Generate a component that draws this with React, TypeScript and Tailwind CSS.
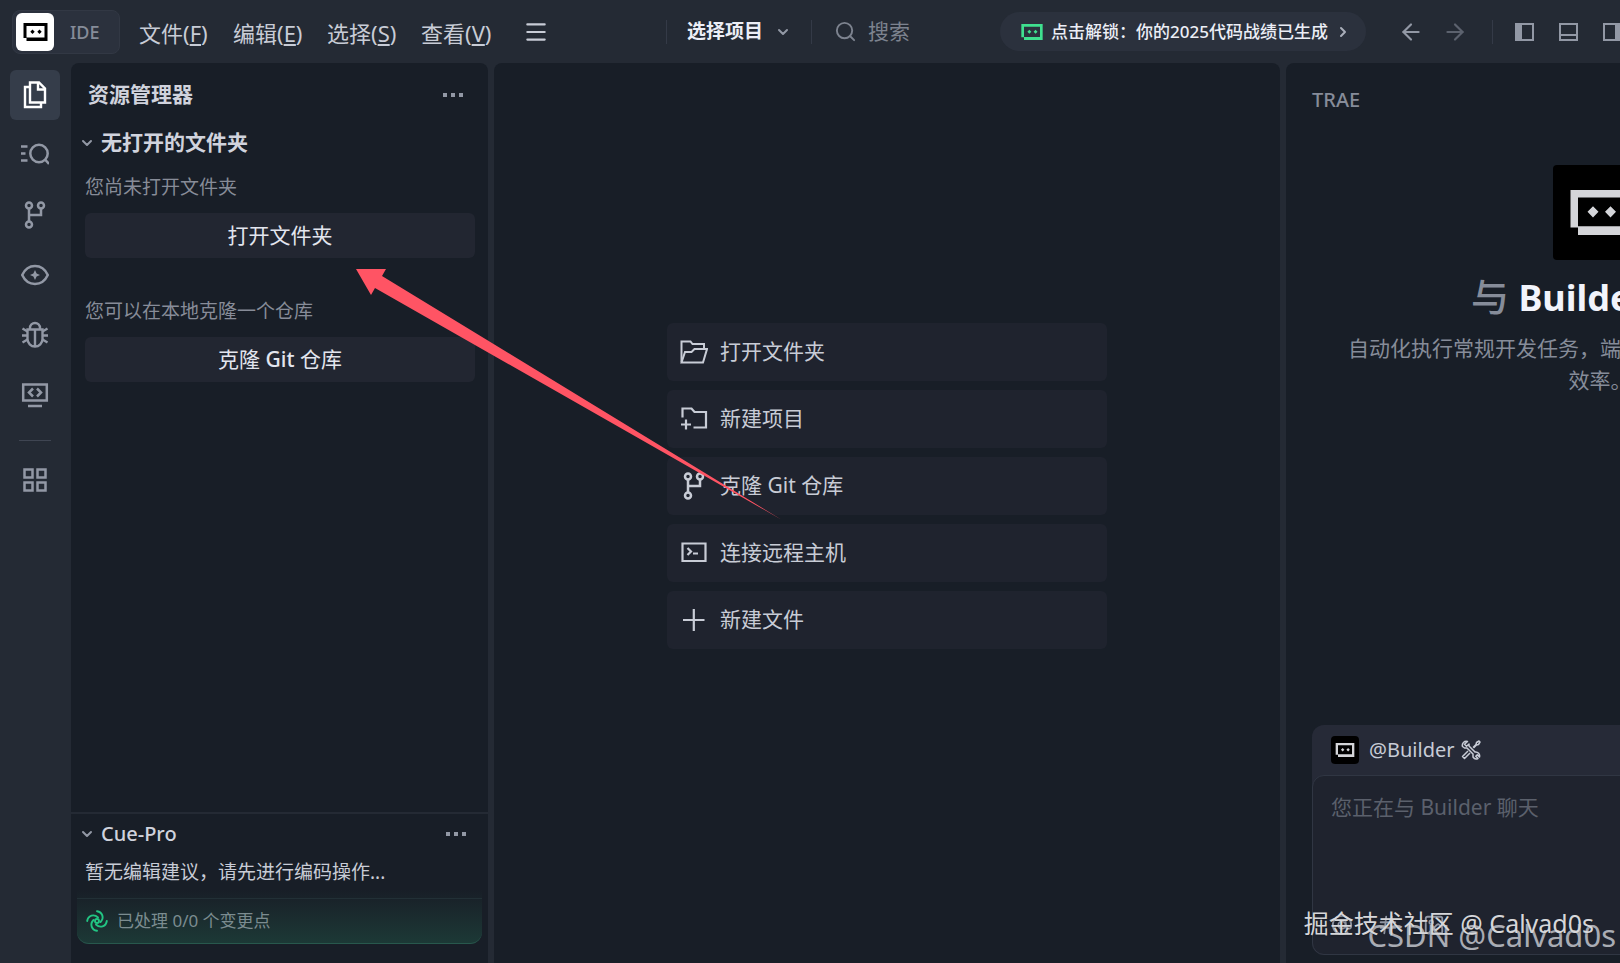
import React from 'react';
import { ArrowLeft, ArrowRight, AtSign, ChevronDown, ChevronRight, Hash, Image, Menu, Search } from 'lucide-react';

interface IconProps {
  className?: string;
}

const BotIcon: React.FC<IconProps> = ({ className }) => (
  <svg viewBox="0 0 24 18" className={className} fill="currentColor" aria-hidden="true">
    <path fillRule="evenodd" d="M0 0H24V18H3V15H0ZM3 3V14.5H21V3Z" />
    <path d="M9 6.5l2.2 2.2L9 11l-2.2-2.3ZM16 6.5l2.2 2.2L16 11l-2.2-2.3Z" />
  </svg>
);

const FilesIcon: React.FC<IconProps> = ({ className }) => (
  <svg viewBox="0 0 28 28" className={className} fill="none" stroke="currentColor" strokeWidth="2.4" aria-hidden="true">
    <path d="M9 1.5h9l6 6V21.5H9Z" />
    <path d="M17 2v6.5h6.5M8.5 6H4V26H20V22" />
  </svg>
);

const SearchListIcon: React.FC<IconProps> = ({ className }) => (
  <svg viewBox="0 0 28 28" className={className} fill="none" stroke="currentColor" strokeWidth="2.5" aria-hidden="true">
    <circle cx="18" cy="12.5" r="8.7" />
    <path d="M24 18.5l4 4.5M0 5.5h6.5M0 12.5h4.5M0 19.5h6.5" />
  </svg>
);

const BranchIcon: React.FC<IconProps> = ({ className }) => (
  <svg viewBox="0 0 28 28" className={className} fill="none" stroke="currentColor" strokeWidth="2.5" aria-hidden="true">
    <circle cx="8" cy="4.5" r="3" />
    <circle cx="20" cy="4.5" r="3" />
    <circle cx="8" cy="23.5" r="3" />
    <path d="M8 7.5v13M20 7.5V14H8" />
  </svg>
);

const EyeIcon: React.FC<IconProps> = ({ className }) => (
  <svg viewBox="0 0 28 28" className={className} fill="none" stroke="currentColor" strokeWidth="2.5" aria-hidden="true">
    <path d="M1.2 14C4 8 8.5 5 14 5s10 3 12.8 9C24 20 19.5 23 14 23S4 20 1.2 14Z" />
    <path d="M14 9l1.6 3.4 3.4 1.6-3.4 1.6L14 19l-1.6-3.4L9 14l3.4-1.6Z" fill="currentColor" stroke="none" />
  </svg>
);

const BugIcon: React.FC<IconProps> = ({ className }) => (
  <svg viewBox="0 0 28 28" className={className} fill="none" stroke="currentColor" strokeWidth="2.4" aria-hidden="true">
    <path d="M6.5 8.5h15V18a7.5 7.5 0 0 1-15 0ZM9 8.5V7a5 5 0 0 1 10 0v1.5M14 8.5v17" />
    <path d="M6.5 10.5L1.5 7.5M6.5 14.5H1M6.5 18.5l-5 3M21.5 10.5l5-3M21.5 14.5H27M21.5 18.5l5 3" />
  </svg>
);

const RemoteIcon: React.FC<IconProps> = ({ className }) => (
  <svg viewBox="0 0 28 28" className={className} fill="none" stroke="currentColor" strokeWidth="2.5" aria-hidden="true">
    <path d="M2.2 3.5h23.6v16H2.200ZM7 25h14" />
    <path d="M12 7.5l-4 4 4 4M16 7.5l4 4-4 4" />
  </svg>
);

const GridIcon: React.FC<IconProps> = ({ className }) => (
  <svg viewBox="0 0 28 28" className={className} fill="none" stroke="currentColor" strokeWidth="2.5" aria-hidden="true">
    <path d="M3.5 3.5h8v8h-8ZM16.5 3.5h8v8h-8ZM3.5 16.5h8v8h-8ZM16.5 16.5h8v8h-8Z" />
  </svg>
);

const FolderOpenIcon: React.FC<IconProps> = ({ className }) => (
  <svg viewBox="0 0 28 28" className={className} fill="none" stroke="currentColor" strokeWidth="2" aria-hidden="true">
    <path d="M1.5 24V3.5h9l2 2.5H24v5" />
    <path d="M1.5 24.5L5 14h6.5l3-3H27L23 24.5Z" />
  </svg>
);

const FolderAddIcon: React.FC<IconProps> = ({ className }) => (
  <svg viewBox="0 0 28 28" className={className} fill="none" stroke="currentColor" strokeWidth="2.2" aria-hidden="true">
    <path d="M2.5 12.5V3.5h9L14.5 7H26v15.5H13.5" />
    <path d="M1 19.5h10M6 14.5v10" />
  </svg>
);

const TerminalIcon: React.FC<IconProps> = ({ className }) => (
  <svg viewBox="0 0 28 28" className={className} fill="none" stroke="currentColor" strokeWidth="2.2" aria-hidden="true">
    <path d="M2.5 4.5h23v17.5h-23Z" />
    <path d="M7.5 9l3.5 3.5L7.5 16M13 14.5h5" />
  </svg>
);

const PlusIcon: React.FC<IconProps> = ({ className }) => (
  <svg viewBox="0 0 28 28" className={className} fill="none" stroke="currentColor" strokeWidth="2.2" aria-hidden="true">
    <path d="M3 14h21.5M13.8 3v22" />
  </svg>
);

const DotsIcon: React.FC<IconProps> = ({ className }) => (
  <svg viewBox="0 0 20 4" className={className} fill="currentColor" aria-hidden="true">
    <path d="M0 0h4v4H0ZM8 0h4v4H8ZM16 0h4v4h-4Z" />
  </svg>
);

const SwirlIcon: React.FC<IconProps> = ({ className }) => (
  <svg viewBox="0 0 22 22" className={className} fill="none" stroke="currentColor" strokeWidth="1.9" strokeLinecap="round" aria-hidden="true">
    <circle cx="11" cy="11" r="2" />
    <path d="M11 1.2C16.5 2 18.5 8 14.5 12" />
    <path d="M20.8 11C20 16.5 14 18.5 10 14.5" />
    <path d="M11 20.8C5.5 20 3.5 14 7.5 10" />
    <path d="M1.2 11C2 5.5 8 3.5 12 7.5" />
  </svg>
);

const ToolsIcon: React.FC<IconProps> = ({ className }) => (
  <svg viewBox="0 0 20 20" className={className} fill="none" stroke="currentColor" strokeWidth="1.5" strokeLinejoin="round" aria-hidden="true">
    <path d="M6.5 1.5A4 4 0 0 0 1.5 6.5L3.5 8H6l6 6v3a4 4 0 0 0 5 1.5L14.8 16.3l1.5-1.5 2.2 2.2A4 4 0 0 0 14 12L8 6V4L5.5 6.2 3.5 4.2Z" />
    <path d="M12 7.5l3-3 .5-2L18 1l1 1-1.5 2.5-2 .5-3 3M7 11l-5.5 5.5 2 2L9 13" />
  </svg>
);

const menus = [
  { label: '文件', hotkey: 'F' },
  { label: '编辑', hotkey: 'E' },
  { label: '选择', hotkey: 'S' },
  { label: '查看', hotkey: 'V' },
];

const activities = [
  { name: '搜索', Icon: SearchListIcon },
  { name: '源代码管理', Icon: BranchIcon },
  { name: '预览', Icon: EyeIcon },
  { name: '调试', Icon: BugIcon },
  { name: '远程', Icon: RemoteIcon },
];

const actions = [
  { label: '打开文件夹', Icon: FolderOpenIcon },
  { label: '新建项目', Icon: FolderAddIcon },
  { label: '克隆 Git 仓库', Icon: BranchIcon },
  { label: '连接远程主机', Icon: TerminalIcon },
  { label: '新建文件', Icon: PlusIcon },
];

const TopBar: React.FC = () => (
  <header className="flex h-[63px] shrink-0 items-center overflow-hidden pl-3">
    <div className="flex h-11 w-[108px] shrink-0 items-center rounded-lg border border-[#323844] bg-[#2b313d] pl-[3px]">
      <span className="flex h-[38px] w-[38px] items-center justify-center rounded-md bg-white text-black">
        <BotIcon className="h-[18px] w-[25px]" />
      </span>
      <span className="ml-4 text-lg font-medium text-[#868c99]">IDE</span>
    </div>

    <nav className="ml-[19px] flex shrink-0 items-center gap-6 pt-1 text-[22px] text-[#c8ccd6]">
      {menus.map((menu) => (
        <button key={menu.hotkey} type="button" className="w-[70px] text-left whitespace-nowrap">
          {menu.label}(<span className="underline underline-offset-2">{menu.hotkey}</span>)
        </button>
      ))}
    </nav>
    <button type="button" aria-label="菜单" className="ml-8 shrink-0 text-[#c8ccd6]">
      <Menu className="h-[26px] w-[26px]" strokeWidth={2} />
    </button>

    <div className="ml-auto flex shrink-0 items-center">
      <span className="h-6 w-px bg-[#343a47]" />
      <button type="button" className="ml-5 flex items-center text-[19px] font-bold text-[#eceef6]">
        选择项目
        <ChevronDown className="ml-3 h-4 w-4 text-[#9298a5]" strokeWidth={3} />
      </button>
      <span className="ml-5 h-6 w-px bg-[#343a47]" />
      <button type="button" className="ml-[22px] flex w-[162px] items-center gap-[11px] text-[21px] text-[#7d838f]">
        <Search className="h-[23px] w-[23px]" strokeWidth={2} />
        搜索
      </button>
      <button type="button" className="ml-1 flex h-[39px] w-[366px] items-center rounded-full bg-[#2b313d] pl-[21px] text-[#eceef6]">
        <BotIcon className="mr-2 h-4 w-[22px] text-[#3fe08f]" />
        <span className="w-[280px] text-left text-[17px] font-medium whitespace-nowrap">点击解锁：你的2025代码战绩已生成</span>
        <ChevronRight className="ml-1 h-4 w-4 text-[#a9aeba]" strokeWidth={3} />
      </button>
    </div>

    <div className="flex w-[254px] shrink-0 items-center overflow-hidden pl-8 text-[#9298a5]">
      <button type="button" aria-label="后退">
        <ArrowLeft className="h-[26px] w-[26px]" strokeWidth={2} />
      </button>
      <button type="button" aria-label="前进" className="ml-[18px] text-[#5c626e]">
        <ArrowRight className="h-[26px] w-[26px]" strokeWidth={2} />
      </button>
      <span className="ml-6 h-6 w-px shrink-0 bg-[#343a47]" />
      <button type="button" aria-label="左侧面板" className="ml-[22px] shrink-0">
        <svg viewBox="0 0 19 18" className="h-[18px] w-[19px]" fill="none" stroke="currentColor" strokeWidth="2">
          <path d="M1 1h17v16H1Z" />
          <path d="M1 1h5v16H1Z" fill="currentColor" />
        </svg>
      </button>
      <button type="button" aria-label="底部面板" className="ml-[25px] shrink-0">
        <svg viewBox="0 0 19 18" className="h-[18px] w-[19px]" fill="none" stroke="currentColor" strokeWidth="2">
          <path d="M1 1h17v16H1ZM1 12h17" />
        </svg>
      </button>
      <button type="button" aria-label="右侧面板" className="ml-[25px] shrink-0">
        <svg viewBox="0 0 19 18" className="h-[18px] w-[19px]" fill="none" stroke="currentColor" strokeWidth="2">
          <path d="M1 1h17v16H1Z" />
          <path d="M13 1h5v16h-5Z" fill="currentColor" />
        </svg>
      </button>
    </div>
  </header>
);

const ActivityBar: React.FC = () => (
  <nav className="flex w-[71px] shrink-0 flex-col items-center pt-[7px] pr-[2px] text-[#9298a5]">
    <button type="button" aria-label="资源管理器" className="flex h-[50px] w-[50px] items-center justify-center rounded-md bg-[#353d4a] text-white">
      <FilesIcon className="h-7 w-7" />
    </button>
    <div className="mt-[5px] flex flex-col">
      {activities.map(({ name, Icon }) => (
        <button key={name} type="button" aria-label={name} className="flex h-[60px] w-[50px] items-center justify-center">
          <Icon className="h-7 w-7" />
        </button>
      ))}
    </div>
    <span className="mt-[15px] h-px w-8 bg-[#3f4552]" />
    <button type="button" aria-label="扩展" className="mt-[25px]">
      <GridIcon className="h-7 w-7" />
    </button>
  </nav>
);

const Explorer: React.FC = () => (
  <aside className="flex w-[417px] shrink-0 flex-col rounded-t-lg bg-[#181e27]">
    <div className="flex h-16 items-center justify-between pr-[25px] pl-[17px]">
      <h2 className="text-[21px] font-bold text-[#d0d3dd]">资源管理器</h2>
      <button type="button" aria-label="更多">
        <DotsIcon className="h-1 w-5 text-[#9298a5]" />
      </button>
    </div>
    <button type="button" className="flex h-8 items-center gap-[6px] pl-2 text-[21px] font-bold text-[#d0d3dd]">
      <ChevronDown className="h-4 w-4 text-[#9298a5]" strokeWidth={3} />
      无打开的文件夹
    </button>
    <div className="pr-[13px] pl-[14px] text-[19px] text-[#878c98]">
      <p className="mt-3 leading-8">您尚未打开文件夹</p>
      <button type="button" className="mt-[10px] h-[45px] w-full rounded-md bg-[#222631] text-[21px] text-[#e2e5ee]">
        打开文件夹
      </button>
      <p className="mt-[37px] leading-8">您可以在本地克隆一个仓库</p>
      <button type="button" className="mt-[10px] h-[45px] w-full rounded-md bg-[#222631] text-[21px] text-[#e2e5ee]">
        克隆 <span className="font-medium">Git</span> 仓库
      </button>
    </div>

    <section className="mt-auto border-t-2 border-[#242a34] pb-[19px]">
      <div className="flex h-10 items-center justify-between pr-[22px] pl-2">
        <button type="button" className="flex items-center gap-[6px] text-[20px] font-medium text-[#d0d3dd]">
          <ChevronDown className="h-4 w-4 text-[#9298a5]" strokeWidth={3} />
          Cue-Pro
        </button>
        <button type="button" aria-label="更多">
          <DotsIcon className="h-1 w-5 text-[#9298a5]" />
        </button>
      </div>
      <p className="px-[14px] text-[19px] leading-9 text-[#c8ccd6]">暂无编辑建议，请先进行编码操作...</p>
      <div className="mx-[6px] rounded-b-xl border-b border-[#28584d] bg-linear-to-b from-[#181e27] to-[#1c3936] pt-2">
        <div className="flex h-[45px] items-center gap-[9px] border-t border-[#223036] pl-[9px] text-[17px] text-[#7b8c90]">
          <SwirlIcon className="h-[22px] w-[22px] text-[#22c583]" />
          已处理 0/0 个变更点
        </div>
      </div>
    </section>
  </aside>
);

const Welcome: React.FC = () => (
  <main className="flex min-w-0 flex-1 flex-col items-center rounded-t-lg bg-[#181e27] pt-[260px]">
    <div className="flex w-[440px] max-w-full flex-col gap-[9px]">
      {actions.map(({ label, Icon }) => (
        <button key={label} type="button" className="flex h-[58px] items-center gap-3 rounded-md bg-[#1f232e] pl-[13px] text-[21px] text-[#c8ccd6]">
          <Icon className="h-7 w-7" />
          {label}
        </button>
      ))}
    </div>
  </main>
);

const ChatPanel: React.FC = () => (
  <aside className="w-[334px] shrink-0 overflow-hidden rounded-tl-lg bg-[#181e27]">
    <div className="flex h-full w-[628px] flex-col px-[26px] pb-2">
      <h2 className="mt-[21px] text-[20px] leading-8 font-medium text-[#868c99]">TRAE</h2>
      <div className="mt-[49px] flex flex-col items-center">
        <span className="flex h-[95px] w-[95px] items-center justify-center rounded bg-black text-[#d4d5d9]">
          <BotIcon className="h-[45px] w-[63px]" />
        </span>
        <h1 className="mt-3 text-4xl leading-[48px] font-bold text-[#f2f4fb]">
          <span className="text-[38px] font-medium text-[#868c99]">与</span> Builder 协作
        </h1>
        <p className="mt-[10px] w-[504px] text-center text-[21px] leading-8 text-[#868c99]">
          自动化执行常规开发任务，端到端交付应用，提升团队效率。
        </p>
      </div>

      <div className="mt-auto flex h-[230px] flex-col rounded-xl bg-[#262a37]">
        <div className="flex h-[50px] items-center pl-[19px] text-[20px] text-[#c8ccd6]">
          <span className="flex h-7 w-7 items-center justify-center rounded bg-black text-[#d4d5d9]">
            <BotIcon className="h-[14px] w-5" />
          </span>
          <span className="ml-[10px] w-[84px]">@Builder</span>
          <ToolsIcon className="ml-2 h-5 w-5" />
        </div>
        <div className="flex flex-1 flex-col rounded-xl border border-[#303643] bg-[#1f232e] px-[18px] pt-[15px] pb-[18px]">
          <textarea
            aria-label="聊天输入"
            placeholder="您正在与 Builder 聊天"
            className="w-full flex-1 resize-none bg-transparent text-[21px] leading-8 placeholder-[#5b606c] outline-none"
          />
          <div className="flex items-center gap-6 text-[#9298a5]">
            <button type="button" aria-label="引用">
              <AtSign className="h-[22px] w-[22px]" />
            </button>
            <button type="button" aria-label="上下文">
              <Hash className="h-[22px] w-[22px]" />
            </button>
            <button type="button" aria-label="图片">
              <Image className="h-[22px] w-[22px]" />
            </button>
          </div>
        </div>
      </div>
    </div>
  </aside>
);

const App: React.FC = () => {
  return (
    <div className="relative flex h-screen flex-col overflow-hidden bg-[#242a34] font-['Noto_Sans','Noto_Sans_CJK_SC',sans-serif]">
      <TopBar />
      <div className="flex min-h-0 flex-1">
        <ActivityBar />
        <div className="flex min-w-0 flex-1 gap-[6px]">
          <Explorer />
          <Welcome />
          <ChatPanel />
        </div>
      </div>

      <svg viewBox="0 0 430 256" className="pointer-events-none absolute top-[266px] left-[354px] h-[256px] w-[430px]" aria-hidden="true">
        <path d="M2 3L32 3L28 10L428 254L21 22L17 29Z" fill="#ff5464" />
      </svg>

      <span className="pointer-events-none absolute right-1 bottom-2 text-[31px] leading-10 whitespace-nowrap text-[#a9acb4]">
        CSDN @Calvad0s
      </span>
      <span className="pointer-events-none absolute right-[26px] bottom-5 text-[25px] leading-10 whitespace-nowrap text-[#d6d7da] text-shadow-sm">
        掘金技术社区 @ Calvad0s
      </span>
    </div>
  );
};

export default App;
